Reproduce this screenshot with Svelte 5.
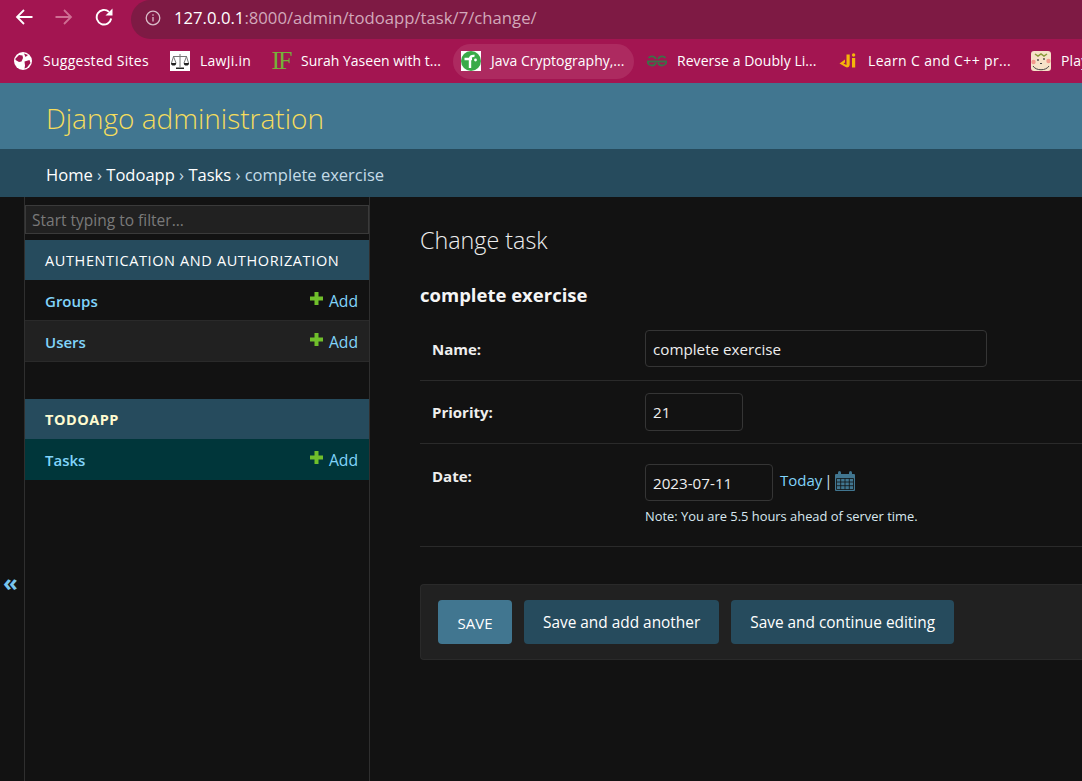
<script>
	// width = pixel width of the bookmark title, spacing = tracking needed to fill it
	const bookmarks = [
		{ id: 'globe', label: 'Suggested Sites', width: 106, spacing: 0.27 },
		{ id: 'scale', label: 'LawJi.in', width: 50, spacing: 0.25 },
		{ id: 'if', label: 'Surah Yaseen with t...', width: 139, spacing: 0 },
		{ id: 'java', label: 'Java Cryptography,...', width: 135, spacing: 0, active: true },
		{ id: 'gfg', label: 'Reverse a Doubly Li...', width: 140, spacing: 0.05 },
		{ id: 'learn', label: 'Learn C and C++ pr...', width: 142, spacing: 0.35 },
		{ id: 'play', label: 'Play', width: 30, spacing: 0.2 }
	];
	const apps = [
		{ name: 'AUTHENTICATION AND AUTHORIZATION', models: ['Groups', 'Users'] },
		{ name: 'TODOAPP', current: true, models: ['Tasks'] }
	];
</script>

<div class="page">
	<div class="chrome">
		<div class="toolbar">
			<svg class="nav back" viewBox="0 0 18 18" width="18" height="18" fill="none" stroke="currentColor" stroke-width="1.8">
				<path d="M17.500 9H2M9 2 2 9l7 7" />
			</svg>
			<svg class="nav fwd" viewBox="0 0 18 18" width="18" height="18" fill="none" stroke="currentColor" stroke-width="1.8">
				<path d="M.5 9H16M9 2l7 7-7 7" />
			</svg>
			<svg class="nav reload" viewBox="0 0 18 18" width="18" height="18" fill="none" stroke="currentColor" stroke-width="1.900">
				<path d="M16.200 10.500A7.300 7.300 0 1 1 14 3.900" />
				<path d="M17.500 .5V7.500H10.500Z" fill="currentColor" stroke="none" />
			</svg>
			<div class="omnibox">
				<svg viewBox="0 0 16 16" width="16" height="16" fill="none" stroke="currentColor" stroke-width="1.300">
					<circle cx="8" cy="8" r="6.800" />
					<path d="M8 7v4.500M8 4.300v1.400" />
				</svg>
				<span class="host">127.0.0.1</span><span class="path">:8000/admin/todoapp/task/7/change/</span>
			</div>
		</div>
		<div class="bookmarks">
			{#each bookmarks as b}
				<div class="bookmark" class:active={b.active}>
					<span class="fav">
						{#if b.id === 'globe'}
							<svg viewBox="0 0 18 18" width="18" height="18">
								<circle cx="9" cy="9" r="9" fill="#fff" />
								<path d="M1.500 6.500 5 3l3.500.5L9 6 7.500 9.500 5 10 1.500 8zM10.500 9.500l5-1.500 1 3-3.500 4.500-2.500 1 .5-3zM10 1.500l4 1.500-2.500 2z" fill="#a31551" />
							</svg>
						{:else if b.id === 'scale'}
							<svg viewBox="0 0 20 20" width="20" height="20">
								<rect width="20" height="20" fill="#fff" />
								<path d="M10 3v13M3 5.500h14M3.500 5.500 1.500 12M3.500 5.500l2.500 6.500M16.500 5.500 14 12M16.500 5.500l2 6.500" stroke="#777" stroke-width="1" fill="none" />
								<path d="M1 12a2.600 2.600 0 0 0 5.200 0zM13.800 12a2.600 2.600 0 0 0 5.200 0zM6 16.500h8v1.500H6z" fill="#222" />
							</svg>
						{:else if b.id === 'if'}
							<span class="if-mark">IF</span>
						{:else if b.id === 'java'}
							<svg viewBox="0 0 20 20" width="20" height="20">
								<rect width="20" height="20" fill="#fff" />
								<circle cx="10" cy="10" r="10" fill="#3aaa48" />
								<path d="M3.500 8H11M9 17V8c0-2 1.500-3.500 4.500-3" stroke="#fff" stroke-width="2.400" fill="none" />
								<circle cx="14.500" cy="9" r="1.400" fill="#fff" />
							</svg>
						{:else if b.id === 'gfg'}
							<svg viewBox="0 0 20 12" width="20" height="12" fill="none" stroke="#3c7048" stroke-width="1.800">
								<path d="M10 6.500H19.500A4.500 4.500 0 0 1 11 8M10 6.500H.5A4.500 4.500 0 0 0 9 8M11 4a4.500 4.500 0 0 1 7.500-1M9 4A4.500 4.500 0 0 0 1.500 3" />
							</svg>
						{:else if b.id === 'learn'}
							<svg viewBox="0 0 18 18" width="18" height="18">
								<path d="M7.500 2.500h3.200v10c0 2.500-2.500 3.500-4 2.500L.5 11.500 6 7.500v3l-1.500 1 3 1.500z" fill="#f5b50a" />
								<rect x="13" y="6" width="3.200" height="9.500" fill="#f5b50a" />
								<circle cx="14.600" cy="3" r="1.700" fill="#f5b50a" />
							</svg>
						{:else}
							<svg viewBox="0 0 20 20" width="20" height="20">
								<rect width="20" height="20" rx="3" fill="#f6e2c8" />
								<path d="M4 3l3 2 3-2 3 2 3-2" stroke="#8a9a3a" stroke-width="1.500" fill="none" />
								<circle cx="2.500" cy="11" r="2.200" fill="#f29a8c" />
								<circle cx="17.500" cy="10" r="2.200" fill="#f29a8c" />
								<circle cx="7" cy="9" r=".9" fill="#444" />
								<circle cx="13" cy="8" r=".9" fill="#444" />
								<path d="M9 12.500h2M2 15c3 5 13 5 16 0" stroke="#444" fill="none" />
							</svg>
						{/if}
					</span>
					<span class="label" style="width: {b.width}px; letter-spacing: {b.spacing}px">{b.label}</span>
				</div>
			{/each}
		</div>
	</div>

	<header class="site-header">Django administration</header>
	<nav class="crumbs">
		<span class="link">Home</span> › <span class="link">Todoapp</span> › <span class="link">Tasks</span> › complete exercise
	</nav>

	<div class="main">
		<div class="gutter"><span class="toggle">«</span></div>
		<aside class="sidebar">
			<input class="filter" placeholder="Start typing to filter..." />
			{#each apps as app}
				<section class="app">
					<div class="caption" class:current={app.current}>{app.name}</div>
					{#each app.models as model, i}
						<div class="row" class:alt={i % 2 === 1} class:selected={app.current}>
							<span class="model">{model}</span>
							<span class="add">
								<svg viewBox="0 0 13 13" width="13" height="13"><path d="M4.500 0h4v4.500H13v4H8.500V13h-4V8.500H0v-4h4.500z" fill="#70bf2b" /></svg>
								<span>Add</span>
							</span>
						</div>
					{/each}
				</section>
			{/each}
		</aside>

		<main class="content">
			<h1>Change task</h1>
			<h2>complete exercise</h2>
			<div class="form-row first">
				<label for="f-name">Name:</label>
				<input id="f-name" class="input name" value="complete exercise" />
			</div>
			<div class="form-row">
				<label for="f-priority">Priority:</label>
				<input id="f-priority" class="input priority" value="21" />
			</div>
			<div class="form-row date">
				<label for="f-date">Date:</label>
				<div>
					<div class="date-line">
						<input id="f-date" class="input date-input" value="2023-07-11" />
						<span class="today">Today</span>
						<span class="sep">|</span>
						<svg viewBox="0 0 20 20" width="20" height="20">
							<path fill="#417690" d="M1 3h18a1 1 0 0 1 1 1v15a1 1 0 0 1-1 1H1a1 1 0 0 1-1-1V4a1 1 0 0 1 1-1z" />
							<rect x="3" y="0" width="3" height="5" rx="1.500" fill="#417690" />
							<rect x="14" y="0" width="3" height="5" rx="1.500" fill="#417690" />
							<path d="M1.500 7.500h17v11h-17zM1.500 11h17M1.500 14.700h17M5.700 7.500v11M10 7.500v11M14.300 7.500v11" stroke="#121212" stroke-width=".8" fill="none" />
						</svg>
					</div>
					<p class="note">Note: You are 5.5 hours ahead of server time.</p>
				</div>
			</div>
			<div class="submit-row">
				<button class="save">SAVE</button>
				<button>Save and add another</button>
				<button>Save and continue editing</button>
			</div>
		</main>
	</div>
</div>

<style>
	:global(body) {
		margin: 0;
		background: #121212;
		overflow: hidden;
	}
	.page {
		width: 1082px;
		height: 781px;
		overflow: hidden;
		display: flex;
		flex-direction: column;
		font-family: "Open Sans", "Noto Sans", sans-serif;
		color: #eeeeee;
	}

	/* browser chrome */
	.chrome {
		background: #a31551;
		height: 83px;
		flex: none;
		overflow: hidden;
	}
	.toolbar {
		display: flex;
		align-items: center;
		height: 39px;
		padding-left: 15px;
		color: #fff;
	}
	.nav { flex: none; margin: -5px 22px 0 0; }
	.fwd { color: #cf6f93; }
	.reload { margin-right: 18px; }
	.omnibox {
		flex: 1;
		height: 39px;
		padding-bottom: 4px;
		box-sizing: border-box;
		background: #7e1a44;
		border-radius: 20px 0 0 20px;
		display: flex;
		align-items: center;
		padding-left: 14px;
		font-size: 16.700px;
		color: #d2a8ba;
	}
	.omnibox svg { margin-right: 13px; opacity: 0.7; color: #fff; }
	.host { color: #fff; }
	.bookmarks {
		display: flex;
		align-items: center;
		gap: 5px;
		height: 44px;
		padding-left: 5px;
		white-space: nowrap;
	}
	.bookmark {
		display: flex;
		align-items: center;
		flex: none;
		height: 35px;
		padding: 0 8px;
		border-radius: 18px;
		font-size: 14px;
		color: #fff;
	}
	.bookmark.active { background: #ad2a60; }
	.label { display: block; line-height: 33px; margin-bottom: 2px; }
	.fav {
		width: 20px;
		height: 20px;
		margin-right: 10px;
		display: flex;
		align-items: center;
		justify-content: center;
	}
	.if-mark {
		font-family: "Liberation Serif", serif;
		font-size: 26px;
		line-height: 20px;
		color: #76b03a;
		letter-spacing: -2px;
	}

	/* django header */
	.site-header {
		flex: none;
		height: 66px;
		line-height: 70px;
		padding-left: 46px;
		box-sizing: border-box;
		background: #417690;
		color: #f5dd5d;
		font-size: 28px;
		font-weight: 300;
	}
	.crumbs {
		flex: none;
		height: 48px;
		line-height: 51px;
		padding-left: 46px;
		background: #264b5d;
		color: #c4dce8;
		font-size: 16.550px;
	}
	.link { color: #fff; }

	.main { flex: 1; display: flex; min-height: 0; }
	.gutter {
		width: 21px;
		flex: none;
		display: flex;
		align-items: center;
		justify-content: flex-start;
		padding: 186px 0 0 3px;
		border-right: 1px solid #2f2f2f;
	}
	.toggle {
		color: #79c5ee;
		font-size: 24px;
		font-weight: 700;
		line-height: 1;
	}
	.sidebar {
		width: 345px;
		flex: none;
		box-sizing: border-box;
		border-right: 1px solid #2f2f2f;
		padding-top: 8px;
	}
	.filter {
		display: block;
		width: 100%;
		height: 29px;
		box-sizing: border-box;
		padding: 0 6px;
		background: #212121;
		border: 1px solid #3a3a3a;
		font: inherit;
		font-size: 15.500px;
		margin-bottom: 6px;
		outline: none;
	}
	.filter::placeholder { color: #7a7a7a; opacity: 1; }
	.app { margin-bottom: 37px; }
	.caption {
		height: 40px;
		line-height: 41px;
		padding-left: 20px;
		background: #264b5d;
		color: #fff;
		font-size: 14.500px;
		letter-spacing: 0.62px;
	}
	.caption.current { font-weight: 700; color: #fffbd0; letter-spacing: 0.5px; }
	.row {
		display: flex;
		justify-content: space-between;
		align-items: center;
		height: 41px;
		padding: 1px 11px 0 20px;
		background: #121212;
		border-bottom: 1px solid #2a2a2a;
		box-sizing: border-box;
		font-size: 15px;
	}
	.row.alt { background: #212121; }
	.row.selected { background: #00363a; border-bottom: none; padding-top: 0; }
	.model { color: #81d4fa; font-weight: 600; }
	.add { display: flex; align-items: center; gap: 6px; color: #81d4fa; font-size: 15.700px; }
	.add svg { margin-top: -5px; }

	/* form */
	.content { flex: 1; padding: 0 0 0 50px; min-width: 0; }
	h1 {
		margin: 27px 0 0;
		font-size: 23.300px;
		font-weight: 300;
		line-height: 32px;
		color: #eeeeee;
	}
	h2 {
		margin: 27px 0 0;
		font-size: 18.500px;
		font-weight: 700;
		line-height: 24px;
		color: #f5f5f5;
	}
	.form-row {
		display: flex;
		align-items: center;
		height: 63px;
		padding-left: 12px;
		border-bottom: 1px solid #2a2a2a;
		box-sizing: border-box;
	}
	.form-row.first { margin-top: 11px; }
	.form-row.date { align-items: flex-start; height: 103px; padding-top: 20px; }
	label {
		width: 213px;
		flex: none;
		font-size: 15px;
		font-weight: 700;
		color: #eeeeee;
	}
	.form-row.date label { padding-top: 2px; }
	.input {
		height: 37px;
		box-sizing: border-box;
		background: #121212;
		border: 1px solid #353535;
		border-radius: 4px;
		padding: 0 7px;
		font: inherit;
		font-size: 15.200px;
		color: #eeeeee;
		outline: none;
	}
	.name { width: 342px; margin-bottom: 1px; }
	.priority { width: 98px; height: 38px; }
	.date-input { width: 128px; }
	.date-line { display: flex; align-items: center; gap: 4px; }
	.today { color: #81d4fa; font-size: 15px; margin-left: 3px; margin-top: -6px; }
	.sep { color: #d8e8f0; font-size: 15px; margin: -6px 0 0 -2px; }
	.date-line svg { margin: -4px 0 0 -2px; }
	.note { margin: 6px 0 0; font-size: 12.900px; color: #d8e8f0; }
	.submit-row {
		display: flex;
		align-items: center;
		gap: 12px;
		height: 76px;
		margin-top: 37px;
		padding-left: 17px;
		background: #212121;
		border: 1px solid #2a2a2a;
		border-right: none;
		border-radius: 4px 0 0 4px;
		box-sizing: border-box;
	}
	button {
		height: 44px;
		padding: 1px 19px 0;
		border: none;
		border-radius: 4px;
		background: #264b5d;
		color: #fff;
		font: inherit;
		font-size: 15.400px;
	}
	button.save { background: #417690; width: 74px; padding: 1px 0 0; font-size: 15px; }
</style>
